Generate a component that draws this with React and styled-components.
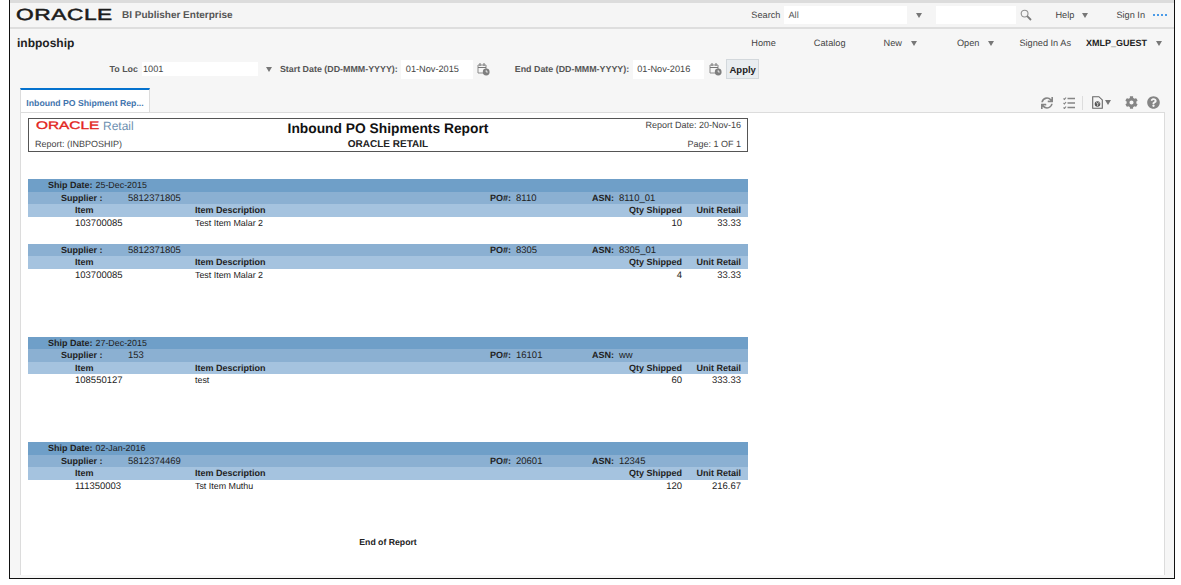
import styled, { createGlobalStyle } from 'styled-components';
import { FaCog, FaQuestionCircle, FaSync } from 'react-icons/fa';

const GlobalStyle = createGlobalStyle`
  html, body {
    margin: 0;
    padding: 0;
    background: #fff;
    overflow: hidden;
  }
  body {
    font-family: 'Liberation Sans', Arial, sans-serif;
    font-size: 10px;
    color: #333;
    text-rendering: geometricPrecision;
  }
`;

const Frame = styled.div`
  box-sizing: border-box;
  width: 1166px;
  height: 579px;
  margin-left: 9px;
  border: 1.5px solid #111;
  border-top: 0;
  background: #f6f6f6;
  display: flex;
  flex-direction: column;
  overflow: hidden;
`;

const TopBar = styled.header`
  box-sizing: border-box;
  height: 29px;
  flex: none;
  display: flex;
  align-items: center;
  padding-right: 7px;
  border-top: 3px solid #dcdcdc;
  border-bottom: 2px solid #dedede;
  background: #f5f5f5;
`;

const OracleMark = styled.span`
  display: inline-block;
  width: 96px;
  margin-left: 6px;
  font-size: 16px;
  line-height: 17px;
  color: #1c1c1c;
  letter-spacing: 0.4px;
  transform: scaleX(1.42);
  transform-origin: left center;
  -webkit-text-stroke: 0.5px #1c1c1c;
`;

const ProductName = styled.span`
  margin-left: 10px;
  font-size: 10px;
  font-weight: 700;
  color: #555;
`;

const TopRight = styled.div`
  margin-left: auto;
  display: flex;
  align-items: center;
`;

const MenuText = styled.span`
  font-size: ${(p) => (p.$dark ? 9 : 9.2)}px;
  color: ${(p) => (p.$dark ? '#222' : '#444')};
  font-weight: ${(p) => (p.$dark ? 700 : 400)};
  margin-left: ${(p) => p.$left || 0}px;
  white-space: nowrap;
`;

const Caret = styled.span`
  flex: none;
  width: 0;
  height: 0;
  margin-left: ${(p) => p.$left || 0}px;
  border-left: 3.5px solid transparent;
  border-right: 3.5px solid transparent;
  border-top: 5px solid #777;
`;

const SearchInput = styled.div`
  box-sizing: border-box;
  width: ${(p) => p.$width}px;
  height: 18px;
  margin-left: ${(p) => p.$left || 0}px;
  padding-left: 4px;
  background: #fff;
  font-size: 9.2px;
  line-height: 18px;
  color: #555;
`;

const Dots = styled.span`
  margin-left: 8px;
  width: 14px;
  border-top: 2px dotted #4a9be8;
`;

const ParamArea = styled.section`
  box-sizing: border-box;
  height: 59px;
  flex: none;
  padding: 0 7px;
`;

const TitleRow = styled.div`
  height: 28px;
  display: flex;
  align-items: center;
`;

const PageTitle = styled.h1`
  margin: 0;
  font-size: 12px;
  font-weight: 700;
  color: #222;
`;

const Nav = styled.nav`
  margin-left: auto;
  padding-right: 5px;
  display: flex;
  align-items: center;
`;

const ParamRow = styled.div`
  display: flex;
  align-items: center;
  height: 24px;
  padding-left: 92.5px;
`;

const ParamLabel = styled.label`
  font-size: 8.9px;
  font-weight: 700;
  color: #555;
  margin-left: ${(p) => p.$left || 0}px;
  white-space: nowrap;
`;

const ParamInput = styled.div`
  box-sizing: border-box;
  width: ${(p) => p.$width}px;
  height: ${(p) => p.$height}px;
  margin-left: ${(p) => p.$left}px;
  padding-left: ${(p) => p.$pad}px;
  background: #fff;
  font-size: 9.2px;
  line-height: ${(p) => p.$height}px;
  color: #444;
`;

const ApplyButton = styled.button`
  box-sizing: border-box;
  width: 33px;
  height: 20px;
  margin-left: 4px;
  padding: 0;
  border: 1px solid #d3d8dc;
  background: #e9edf0;
  font-family: inherit;
  font-size: 9.5px;
  font-weight: 700;
  color: #222;
`;

const TabRow = styled.div`
  height: 24px;
  flex: none;
  display: flex;
  align-items: flex-end;
  padding: 0 14px 0 10px;
`;

const Tab = styled.div`
  box-sizing: border-box;
  width: 130px;
  height: 24px;
  border: 1px solid #dcdcdc;
  border-top: 2px solid #0572ce;
  border-bottom: 0;
  background: #fff;
  text-align: center;
  font-size: 8.7px;
  font-weight: 700;
  line-height: 26px;
  color: #3f74ad;
  white-space: nowrap;
`;

const Toolbar = styled.div`
  margin-left: auto;
  height: 24px;
  padding-top: 5px;
  box-sizing: border-box;
  display: flex;
  align-items: center;
  color: #858585;
`;

const ToolIcon = styled.span`
  display: flex;
  margin-left: ${(p) => p.$left || 0}px;
`;

const ToolDivider = styled.span`
  width: 1px;
  height: 14px;
  margin-left: 7px;
  background: #ddd;
`;

const Panel = styled.main`
  box-sizing: border-box;
  flex: 1;
  margin: 0 9px 3px 10px;
  padding: 5px 0 0 7px;
  border: 1px solid #dcdcdc;
  border-bottom: 0;
  background: #fff;
`;

const Report = styled.div`
  width: 720px;
`;

const ReportHead = styled.div`
  box-sizing: border-box;
  height: 34px;
  padding: 0 6px;
  border: 1.5px solid #555;
  display: grid;
  grid-template-columns: 1fr 1fr 1fr;
  grid-template-rows: 18px 14px;
  align-items: center;
`;

const RetailLogo = styled.div`
  display: flex;
  align-items: center;
  align-self: start;
  padding-left: 1px;
`;

const RetailMark = styled.span`
  display: inline-block;
  width: 67px;
  font-size: 11px;
  line-height: 12px;
  color: #e2231a;
  transform: scaleX(1.4);
  transform-origin: left center;
  -webkit-text-stroke: 0.35px #e2231a;
`;

const RetailWord = styled.span`
  font-size: 12px;
  color: #6d8fb0;
`;

const ReportTitle = styled.div`
  text-align: center;
  font-size: 13.8px;
  font-weight: 700;
  color: #111;
  white-space: nowrap;
`;

const ReportSub = styled.div`
  text-align: center;
  font-size: 10px;
  font-weight: 700;
  color: #222;
`;

const HeadText = styled.div`
  font-size: 9px;
  color: #444;
  align-self: ${(p) => (p.$top ? 'start' : 'center')};
  padding-top: ${(p) => (p.$top ? 1 : 0)}px;
  text-align: ${(p) => (p.$right ? 'right' : 'left')};
`;

const ShipGroup = styled.section`
  margin-top: ${(p) => p.$top}px;
`;

const Bar = styled.div`
  box-sizing: border-box;
  display: grid;
  align-items: baseline;
  height: ${(p) => p.$height || 12.5}px;
  padding-top: 1px;
  background: ${(p) => p.$bg};
  font-size: 9.5px;
  line-height: 11px;
  color: #222;
  white-space: nowrap;
`;

const ShipBar = styled(Bar)`
  grid-template-columns: auto 1fr;
  column-gap: 3px;
  padding-left: 20px;
`;

const SupplierBar = styled(Bar)`
  grid-template-columns: 67px 362px 102px 1fr;
  padding-left: 33px;
`;

const ItemGrid = styled(Bar)`
  grid-template-columns: 120px 1fr 100px 59px;
  padding-left: 47px;
  padding-right: 7px;
`;

const B = styled.b`
  font-size: 9px;
  font-weight: 700;
  color: #222;
`;

const SmallText = styled.span`
  font-size: 8.9px;
`;

const Pair = styled.span`
  display: inline-flex;
  align-items: baseline;
  gap: 5px;
`;

const Num = styled.span`
  text-align: right;
`;

const EndNote = styled.div`
  width: 720px;
  margin-top: 44px;
  text-align: center;
  font-size: 8.7px;
  font-weight: 700;
  color: #222;
`;

const shipments = [
  { top: 27, date: '25-Dec-2015', supplier: '5812371805', po: '8110', asn: '8110_01', item: '103700085', desc: 'Test Item Malar 2', qty: '10', retail: '33.33' },
  { top: 14, supplier: '5812371805', po: '8305', asn: '8305_01', item: '103700085', desc: 'Test Item Malar 2', qty: '4', retail: '33.33' },
  { top: 55, date: '27-Dec-2015', supplier: '153', po: '16101', asn: 'ww', item: '108550127', desc: 'test', qty: '60', retail: '333.33' },
  { top: 55, date: '02-Jan-2016', supplier: '5812374469', po: '20601', asn: '12345', item: '111350003', desc: 'Tst Item Muthu', qty: '120', retail: '216.67' },
];

function CalendarIcon({ left }) {
  return (
    <ToolIcon $left={left}>
      <svg width='13' height='14' viewBox='0 0 13 14' fill='none'>
        <path d='M1 3h8v8H1z' stroke='#8a8a8a' strokeWidth='1' />
        <path d='M3 1v3M7 1v3M1 5.5h8' stroke='#777' strokeWidth='1' />
        <circle cx='9.2' cy='10' r='3.4' fill='#7f7f7f' />
        <path d='M9.2 8.2V10h1.6' stroke='#fff' strokeWidth='0.8' />
      </svg>
    </ToolIcon>
  );
}

function SearchIcon() {
  return (
    <ToolIcon $left={4}>
      <svg width='12' height='12' viewBox='0 0 12 12' fill='none'>
        <circle cx='4.6' cy='4.6' r='3.4' stroke='#8f8f8f' strokeWidth='1.1' />
        <path d='M7.2 7.2l3.8 3.8' stroke='#7b7b7b' strokeWidth='1.8' />
      </svg>
    </ToolIcon>
  );
}

function ListIcon() {
  return (
    <ToolIcon $left={10}>
      <svg width='12' height='12' viewBox='0 0 12 12' fill='none' stroke='#858585'>
        <path d='M4.5 1.5H12M4.5 6H12M4.5 10.5H12' strokeWidth='1.6' />
        <path d='M.5 1.5l1 1 1.5-2M.5 6l1 1 1.5-2M.5 10.5l1 1 1.5-2' strokeWidth='1.1' />
      </svg>
    </ToolIcon>
  );
}

function DocIcon() {
  return (
    <ToolIcon $left={9}>
      <svg width='11' height='13' viewBox='0 0 11 13' fill='none'>
        <path d='M.7.7h6.2l3.4 3.2v8.4H.7z' stroke='#666' strokeWidth='1.1' />
        <circle cx='5.5' cy='8' r='2.8' fill='#555' />
        <path d='M4 6.5l2 1.2-.6 2.2M6.8 6l.4 1.5' stroke='#fff' strokeWidth='0.7' />
      </svg>
    </ToolIcon>
  );
}

function Shipment({ data }) {
  return (
    <ShipGroup $top={data.top}>
      {data.date && (
        <ShipBar $bg='#6f9fc8'>
          <B>Ship Date:</B>
          <SmallText>{data.date}</SmallText>
        </ShipBar>
      )}
      <SupplierBar $bg='#8bb0d2'>
        <B>Supplier :</B>
        <span>{data.supplier}</span>
        <Pair>
          <B>PO#:</B>
          <span>{data.po}</span>
        </Pair>
        <Pair>
          <B>ASN:</B>
          <span>{data.asn}</span>
        </Pair>
      </SupplierBar>
      <ItemGrid $bg='#a5c3df'>
        <B>Item</B>
        <B>Item Description</B>
        <Num><B>Qty Shipped</B></Num>
        <Num><B>Unit Retail</B></Num>
      </ItemGrid>
      <ItemGrid $bg='#fff' $height={13}>
        <span>{data.item}</span>
        <SmallText>{data.desc}</SmallText>
        <Num>{data.qty}</Num>
        <Num>{data.retail}</Num>
      </ItemGrid>
    </ShipGroup>
  );
}

export default function App() {
  return (
    <>
      <GlobalStyle />
      <Frame>
        <TopBar>
          <OracleMark>ORACLE</OracleMark>
          <ProductName>BI Publisher Enterprise</ProductName>
          <TopRight>
            <MenuText>Search</MenuText>
            <SearchInput $width={123} $left={4}>All</SearchInput>
            <Caret $left={9} />
            <SearchInput $width={80} $left={14} />
            <SearchIcon />
            <MenuText $left={23}>Help</MenuText>
            <Caret $left={8} />
            <MenuText $left={28}>Sign In</MenuText>
            <Dots />
          </TopRight>
        </TopBar>
        <ParamArea>
          <TitleRow>
            <PageTitle>inbpoship</PageTitle>
            <Nav>
              <MenuText>Home</MenuText>
              <MenuText $left={38}>Catalog</MenuText>
              <MenuText $left={38}>New</MenuText>
              <Caret $left={9} />
              <MenuText $left={40}>Open</MenuText>
              <Caret $left={9} />
              <MenuText $left={25}>Signed In As</MenuText>
              <MenuText $left={15} $dark>XMLP_GUEST</MenuText>
              <Caret $left={9} />
            </Nav>
          </TitleRow>
          <ParamRow>
            <ParamLabel>To Loc</ParamLabel>
            <ParamInput $width={116} $height={14} $left={4} $pad={1}>1001</ParamInput>
            <Caret $left={8.5} />
            <ParamLabel $left={7.5}>Start Date (DD-MMM-YYYY):</ParamLabel>
            <ParamInput $width={72} $height={19} $left={3} $pad={5}>01-Nov-2015</ParamInput>
            <CalendarIcon left={4} />
            <ParamLabel $left={25}>End Date (DD-MMM-YYYY):</ParamLabel>
            <ParamInput $width={71} $height={19} $left={4} $pad={4}>01-Nov-2016</ParamInput>
            <CalendarIcon left={5} />
            <ApplyButton>Apply</ApplyButton>
          </ParamRow>
        </ParamArea>
        <TabRow>
          <Tab>Inbound PO Shipment Rep...</Tab>
          <Toolbar>
            <ToolIcon><FaSync size={12} /></ToolIcon>
            <ListIcon />
            <ToolDivider />
            <DocIcon />
            <Caret $left={2} />
            <ToolIcon $left={14}><FaCog size={13} /></ToolIcon>
            <ToolIcon $left={9}><FaQuestionCircle size={13} /></ToolIcon>
          </Toolbar>
        </TabRow>
        <Panel>
          <Report>
            <ReportHead>
              <RetailLogo>
                <RetailMark>ORACLE</RetailMark>
                <RetailWord>Retail</RetailWord>
              </RetailLogo>
              <ReportTitle>Inbound PO Shipments Report</ReportTitle>
              <HeadText $right $top>Report Date: 20-Nov-16</HeadText>
              <HeadText>Report: (INBPOSHIP)</HeadText>
              <ReportSub>ORACLE RETAIL</ReportSub>
              <HeadText $right>Page: 1 OF 1</HeadText>
            </ReportHead>
            {shipments.map((item) => (
              <Shipment key={item.po} data={item} />
            ))}
            <EndNote>End of Report</EndNote>
          </Report>
        </Panel>
      </Frame>
    </>
  );
}
